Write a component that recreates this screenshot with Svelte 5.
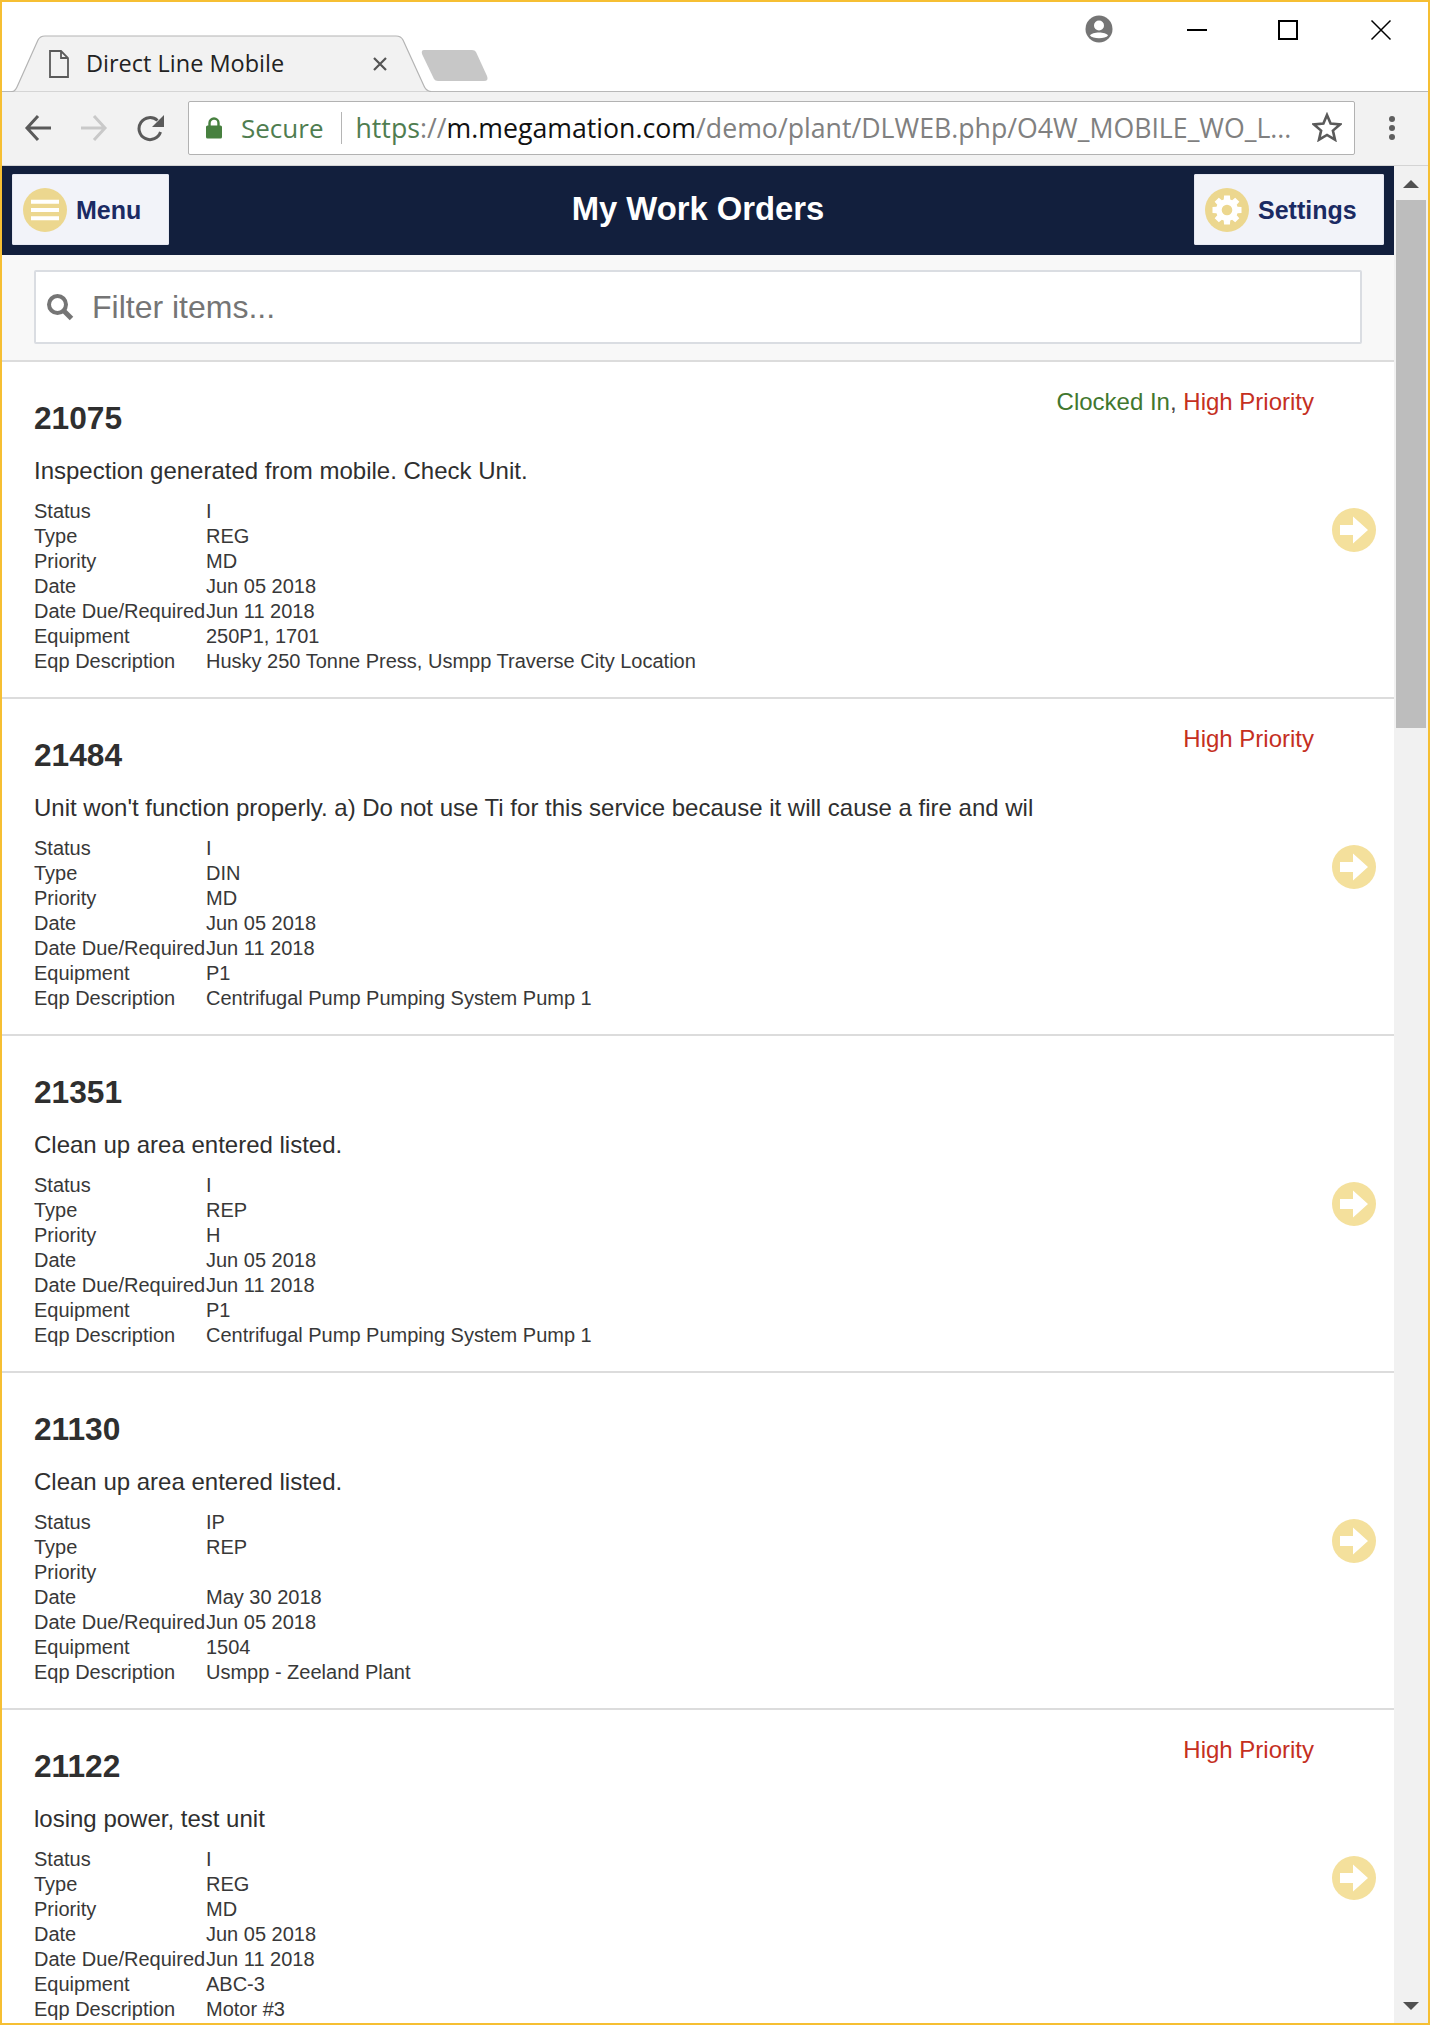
<script>
  const rows = [
    { id: '21075', tags: ['clock', 'high'], desc: 'Inspection generated from mobile. Check Unit.', vals: ['I', 'REG', 'MD', 'Jun 05 2018', 'Jun 11 2018', '250P1, 1701', 'Husky 250 Tonne Press, Usmpp Traverse City Location'] },
    { id: '21484', tags: ['high'], desc: "Unit won't function properly. a) Do not use Ti for this service because it will cause a fire and wil", vals: ['I', 'DIN', 'MD', 'Jun 05 2018', 'Jun 11 2018', 'P1', 'Centrifugal Pump Pumping System Pump 1'] },
    { id: '21351', tags: [], desc: 'Clean up area entered listed.', vals: ['I', 'REP', 'H', 'Jun 05 2018', 'Jun 11 2018', 'P1', 'Centrifugal Pump Pumping System Pump 1'] },
    { id: '21130', tags: [], desc: 'Clean up area entered listed.', vals: ['IP', 'REP', '', 'May 30 2018', 'Jun 05 2018', '1504', 'Usmpp - Zeeland Plant'] },
    { id: '21122', tags: ['high'], desc: 'losing power, test unit', vals: ['I', 'REG', 'MD', 'Jun 05 2018', 'Jun 11 2018', 'ABC-3', 'Motor #3'] }
  ];
  const labels = ['Status', 'Type', 'Priority', 'Date', 'Date Due/Required', 'Equipment', 'Eqp Description'];

  function gearPath() {
    const pt = (r, a) => `${(22 + r * Math.sin(a)).toFixed(2)} ${(22 - r * Math.cos(a)).toFixed(2)}`;
    let d = '';
    for (let k = 0; k < 8; k++) {
      const c = (k * Math.PI) / 4;
      const parts = [pt(11, c - 0.3), pt(14.8, c - 0.2), pt(14.8, c + 0.2), pt(11, c + 0.3)];
      d += (k === 0 ? 'M' : 'L') + parts.join(' L') + ' ';
    }
    return d + 'Z M22 16.700 A5.300 5.300 0 1 0 22 27.300 A5.300 5.300 0 1 0 22 16.700 Z';
  }
  const gear = gearPath();
</script>

<div class="frame">
  <div class="titlebar">
    <div class="tab">
      <svg class="tabshape" width="424" height="57" viewBox="0 0 424 57"><path d="M0 56.500 H1 Q4 56.500 6 52 L27 5 Q29 1 34 1 H385 Q390 1 392 5 L413 51 Q415 56 420 56.500" fill="#f2f2f2" stroke="#b4b4b4" stroke-width="1.200"/></svg>
      <svg class="docicon" width="22" height="30" viewBox="0 0 22 30"><path d="M2 2 H13 L20 9 V28 H2 Z M13 2 V9 H20" fill="none" stroke="#5a5a5a" stroke-width="1.800"/></svg>
      <span class="tabtitle">Direct Line Mobile</span>
      <svg class="tabclose" width="16" height="16" viewBox="0 0 16 16"><path d="M2 2 L14 14 M14 2 L2 14" stroke="#555" stroke-width="2.200"/></svg>
    </div>
    <svg class="newtab" width="68" height="33" viewBox="0 0 68 33"><path d="M3 1 H51 Q54 1 55 3 L66 27 Q68 32 63 32 H17 Q14 32 13 30 L1 5 Q0 1 3 1 Z" fill="#c7c7c7"/></svg>
    <div class="winctl">
      <svg class="profile" width="28" height="28" viewBox="0 0 28 28"><circle cx="14" cy="14" r="13.500" fill="#757575"/><circle cx="14" cy="10.500" r="5" fill="#fff"/><path d="M5 20.500 C7 16.500 21 16.500 23 20.500 C20.500 24 7.500 24 5 20.500 Z" fill="#fff"/></svg>
      <svg class="minimize" width="22" height="22" viewBox="0 0 22 22"><path d="M1 11 H21" stroke="#000" stroke-width="2"/></svg>
      <svg class="maximize" width="22" height="22" viewBox="0 0 22 22"><rect x="2" y="2" width="18" height="18" fill="none" stroke="#000" stroke-width="2"/></svg>
      <svg class="closex" width="22" height="22" viewBox="0 0 22 22"><path d="M1.500 1.500 L20.500 20.500 M20.500 1.500 L1.500 20.500" stroke="#000" stroke-width="1.500"/></svg>
    </div>
  </div>

  <div class="toolbar">
    <svg class="tool back" width="28" height="28" viewBox="0 0 28 28"><path d="M27 14 H4 M14 2 L3 14 L14 26" fill="none" stroke="#5a5a5a" stroke-width="3"/></svg>
    <svg class="tool fwd" width="28" height="28" viewBox="0 0 28 28"><path d="M1 14 H24 M14 2 L25 14 L14 26" fill="none" stroke="#c9c9c9" stroke-width="3"/></svg>
    <svg class="tool reload" width="29" height="28" viewBox="0 0 29 28"><path d="M24.500 18 A11 11 0 1 1 21.500 6.500" fill="none" stroke="#5a5a5a" stroke-width="3"/><path d="M28 1 V13 H16 Z" fill="#5a5a5a"/></svg>
    <div class="omnibox">
      <svg class="lock" width="18" height="22" viewBox="0 0 18 22"><path d="M4.500 9 V6 A4.500 4.500 0 0 1 13.500 6 V9" fill="none" stroke="#47803f" stroke-width="2.400"/><rect x="1" y="8.500" width="16" height="13" rx="1.500" fill="#47803f"/></svg>
      <span class="secure">Secure</span>
      <span class="sep"></span>
      <span class="url"><span class="https">https</span><span class="grey">://</span><span class="host">m.megamation.com</span><span class="grey">/demo/plant/DLWEB.php/O4W_MOBILE_WO_L...</span></span>
      <svg class="star" width="30" height="30" viewBox="0 0 30 30"><path d="M15 3 L18.600 11.600 L28 12.400 L20.900 18.600 L23 27.700 L15 22.900 L7 27.700 L9.100 18.600 L2 12.400 L11.400 11.600 Z" fill="none" stroke="#5a5a5a" stroke-width="2.600"/></svg>
    </div>
    <svg class="kebab" width="8" height="26" viewBox="0 0 8 26"><circle cx="4" cy="4" r="3" fill="#5f5f5f"/><circle cx="4" cy="13" r="3" fill="#5f5f5f"/><circle cx="4" cy="22" r="3" fill="#5f5f5f"/></svg>
  </div>

  <div class="viewport">
    <div class="content">
      <header class="appbar">
        <button class="appbtn menu">
          <span class="circle">
            <svg width="44" height="44" viewBox="0 0 44 44"><path d="M8 13.700 H36 M8 22 H36 M8 30.300 H36" stroke="#fff" stroke-width="4"/></svg>
          </span>
          <span class="btnlabel">Menu</span>
        </button>
        <h1>My Work Orders</h1>
        <button class="appbtn settings">
          <span class="circle">
            <svg width="44" height="44" viewBox="0 0 44 44"><path fill="#fff" fill-rule="evenodd" d={gear}/></svg>
          </span>
          <span class="btnlabel">Settings</span>
        </button>
      </header>

      <div class="filterbar">
        <div class="filter">
          <svg class="search" width="28" height="28" viewBox="0 0 28 28"><circle cx="11.500" cy="11.500" r="8.500" fill="none" stroke="#757575" stroke-width="4"/><path d="M17.500 17.500 L25.500 25.500" stroke="#757575" stroke-width="5"/></svg>
          <span class="placeholder">Filter items...</span>
        </div>
      </div>

      {#each rows as r}
        <article class="item">
          <div class="body">
            <div class="tags">
              {#if r.tags.includes('clock')}<span class="green">Clocked In</span>,{' '}{/if}{#if r.tags.includes('high')}<span class="red">High Priority</span>{/if}
            </div>
            <h2>{r.id}</h2>
            <p class="desc">{r.desc}</p>
            <div class="fields">
              {#each labels as l, i}
                <span>{l}</span><span>{r.vals[i]}</span>
              {/each}
            </div>
          </div>
          <svg class="go" width="44" height="44" viewBox="0 0 44 44"><circle cx="22" cy="22" r="22" fill="#f4e09c"/><path d="M8 17 H21 V8.500 L36 22 L21 35.500 V27 H8 Z" fill="#fff"/></svg>
        </article>
      {/each}
    </div>

    <aside class="scrollbar">
      <span class="arrow up"></span>
      <span class="thumb"></span>
      <span class="arrow down"></span>
    </aside>
  </div>
</div>

<style>
  :global(body) { margin: 0; background: #fff; }
  .frame {
    width: 1430px; height: 2025px; box-sizing: border-box;
    border: 2px solid #f6bf33; overflow: hidden;
    display: flex; flex-direction: column; background: #fff;
    font-family: "Liberation Sans", Arial, sans-serif;
  }
  .titlebar {
    height: 90px; flex: none; box-sizing: border-box;
    border-bottom: 1px solid #b8b8b8;
    display: flex; align-items: flex-start; padding-left: 9px;
  }
  .tab {
    position: relative; width: 416px; height: 57px; margin-top: 33px;
    display: flex; align-items: center; flex: none;
  }
  .tabshape { position: absolute; left: 0; top: 0; }
  .docicon { position: relative; margin-left: 37px; flex: none; }
  .tabtitle {
    position: relative; margin-left: 16px; width: 286px;
    font: 23.500px/1 "Open Sans", sans-serif; color: #222;
  }
  .tabclose { position: relative; flex: none; }
  .newtab { flex: none; margin: 47px 0 0 -6px; }
  .winctl { margin-left: auto; display: flex; align-items: flex-start; }
  .profile { margin: 13px 0 0 0; }
  .minimize { margin: 17px 0 0 73px; }
  .maximize { margin: 17px 0 0 69px; }
  .closex { margin: 17px 36px 0 71px; }

  .toolbar {
    height: 74px; flex: none; box-sizing: border-box; background: #f2f2f2;
    display: flex; align-items: center; padding: 0 0 1px 22px;
    border-bottom: 1px solid #d4d4d4;
  }
  .tool { flex: none; }
  .fwd { margin-left: 28px; }
  .reload { margin-left: 28px; }
  .omnibox {
    flex: none; margin-left: 23px; width: 1167px; height: 54px; box-sizing: border-box;
    background: #fff; border: 1px solid #b2b2b2; border-radius: 2px;
    display: flex; align-items: center; padding-left: 16px;
    font: 27px/1 "Open Sans", sans-serif; white-space: nowrap;
  }
  .lock { flex: none; }
  .secure { margin-left: 18px; color: #4f7d50; font-size: 26px; }
  .sep { width: 1px; height: 32px; background: #b5b5b5; margin: 0 13px 0 18px; flex: none; }
  .url { flex: none; width: 949px; overflow: hidden; font-size: 26.700px; line-height: 36px; }
  .https { color: #4f7d50; }
  .grey { color: #808080; }
  .host { color: #111; }
  .star { flex: none; margin: 0 0 2px 8px; }
  .kebab { flex: none; margin-left: 33px; }

  .viewport { flex: 1; min-height: 0; display: flex; }
  .content { flex: 1; min-width: 0; }
  .scrollbar {
    width: 34px; flex: none; background: #f1f1f1;
    display: flex; flex-direction: column; align-items: center;
  }
  .thumb { width: 30px; height: 528px; background: #bdbdbd; margin-top: 12px; }
  .arrow { width: 0; height: 0; border-left: 8px solid transparent; border-right: 8px solid transparent; }
  .up { border-bottom: 8px solid #505050; margin-top: 14px; }
  .down { border-top: 8px solid #505050; margin-top: auto; margin-bottom: 13px; }

  .appbar {
    height: 89px; box-sizing: border-box; background: #121f3d;
    display: flex; align-items: center; justify-content: space-between;
    padding: 0 10px 2px 10px;
  }
  .appbtn {
    height: 71px; border: 0; padding: 0 0 0 11px; margin: 0; border-radius: 2px;
    background: #f2f3f9; color: #1b2a63;
    display: flex; align-items: center; gap: 9px;
    box-shadow: inset 0 0 0 1px #e6e8f2;
    font: bold 25px "Liberation Sans", Arial, sans-serif;
  }
  .btnlabel { padding-top: 2px; }
  .menu { width: 157px; }
  .settings { width: 190px; }
  .circle { width: 44px; height: 44px; border-radius: 50%; background: #ecd78f; flex: none; display: block; }
  .circle svg { display: block; }
  h1 {
    margin: 0 0 0 33px; color: #fff; font-size: 32.800px; font-weight: bold; line-height: 1;
  }

  .filterbar {
    height: 107px; box-sizing: border-box; background: #f8f8f8;
    padding: 15px 32px 0 32px; border-bottom: 2px solid #dcdcdc;
  }
  .filter {
    height: 74px; box-sizing: border-box; width: 1328px; background: #fff;
    border: 2px solid #dadde2; border-radius: 2px;
    display: flex; align-items: center; padding-left: 10px;
  }
  .search { flex: none; }
  .placeholder { margin-left: 18px; font-size: 32px; color: #757575; }

  .item {
    height: 337px; box-sizing: border-box; border-bottom: 2px solid #dcdcdc;
    display: flex; align-items: center; padding: 0 18px 0 32px; background: #fff;
    color: #2f2f2f;
  }
  .body { flex: 1; min-width: 0; align-self: stretch; position: relative; padding-top: 38px; }
  .tags {
    position: absolute; right: 18px; top: 26px; font-size: 24px; line-height: 28px; color: #444;
    white-space: nowrap;
  }
  .green { color: #41772e; }
  .red { color: #c5301f; }
  h2 { margin: 0; font-size: 31.700px; line-height: 36px; font-weight: bold; }
  .desc { margin: 21px 0 0 0; font-size: 24px; line-height: 28px; white-space: nowrap; }
  .fields {
    margin-top: 14px; display: grid; grid-template-columns: 172px 1fr;
    font-size: 20px; line-height: 25px; color: #383838;
  }
  .fields span { min-height: 25px; white-space: nowrap; }
  .go { flex: none; }
</style>
